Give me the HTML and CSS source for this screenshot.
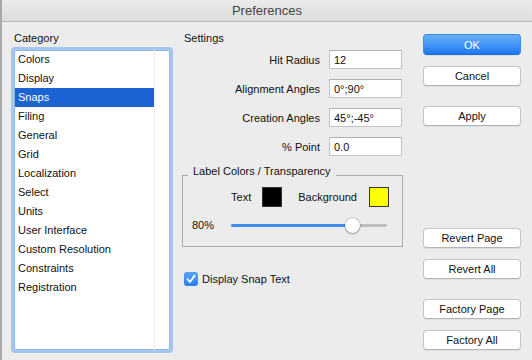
FILE: index.html
```html
<!DOCTYPE html>
<html lang="en">
<head>
  <meta charset="UTF-8" />
  <title>Preferences</title>
  <link rel="stylesheet" href="styles.css">
</head>
<body>

  <div class="window">
    <div class="titlebar">Preferences</div>

    <div class="content">

      <!-- category list -->
      <div class="category">
        <div class="heading category-heading">Category</div>
        <div class="list">
          <ul class="items">
            <li>Colors</li>
            <li>Display</li>
            <li class="selected">Snaps</li>
            <li>Filing</li>
            <li>General</li>
            <li>Grid</li>
            <li>Localization</li>
            <li>Select</li>
            <li>Units</li>
            <li>User Interface</li>
            <li>Custom Resolution</li>
            <li>Constraints</li>
            <li>Registration</li>
          </ul>
          <div class="scrollbar"></div>
        </div>
      </div>

      <!-- settings -->
      <div class="settings">
        <div class="heading settings-heading">Settings</div>

        <div class="fields">
          <label class="field"><span>Hit Radius</span><input type="text" value="12"></label>
          <label class="field"><span>Alignment Angles</span><input type="text" value="0°;90°"></label>
          <label class="field"><span>Creation Angles</span><input type="text" value="45°;-45°"></label>
          <label class="field"><span>% Point</span><input type="text" value="0.0"></label>
        </div>

        <div class="group">
          <div class="group-title">Label Colors / Transparency</div>
          <div class="swatches">
            <span>Text</span>
            <span class="swatch swatch-black"></span>
            <span class="swatch-label">Background</span>
            <span class="swatch swatch-yellow"></span>
          </div>
          <div class="slider-row">
            <span class="slider-value">80%</span>
            <div class="track">
              <div class="fill" style="width: 77.5%"></div>
              <div class="knob" style="left: 77.5%"></div>
            </div>
          </div>
        </div>

        <label class="check">
          <span class="checkbox">
            <svg width="14" height="14" viewBox="0 0 14 14">
              <path d="M3.5 7.2 L6 10 L10.6 3.6" fill="none" stroke="#fff" stroke-width="1.8" stroke-linecap="round" stroke-linejoin="round"/>
            </svg>
          </span>
          Display Snap Text
        </label>
      </div>

      <!-- buttons -->
      <div class="actions">
        <button class="btn btn-primary">OK</button>
        <button class="btn gap-sm">Cancel</button>
        <button class="btn gap-md">Apply</button>

        <button class="btn push">Revert Page</button>
        <button class="btn gap-sm">Revert All</button>
        <button class="btn gap-md">Factory Page</button>
        <button class="btn gap-sm">Factory All</button>
      </div>

    </div>
  </div>

</body>
</html>
```

FILE: styles.css
```css
body {
  margin: 0;
  background-color: #ececec;
  font-family: "Liberation Sans", Arial, sans-serif;
  font-size: 11px;
  color: #111;
  overflow: hidden;
}

.window {
  width: 532px;
  height: 360px;
  box-sizing: border-box;
  border-left: 2px solid #a8a8a8;
  display: flex;
  flex-direction: column;
}

.titlebar {
  height: 21px;
  line-height: 22px;
  border-bottom: 1px solid #b9b9b9;
  background: linear-gradient(#ebebeb, #dcdcdc);
  text-align: center;
  font-size: 13px;
  color: #444;
}

.content {
  flex: 1;
  min-height: 0;
  display: flex;
  padding: 9px 11px 7px 9px;
}

.heading {
  line-height: 14px;
  color: #111;
}

.category-heading {
  padding-left: 3px;
}

/* ---------- category ---------- */
.category {
  width: 162px;
}

.list {
  margin-top: 2px;
  height: 306px;
  box-sizing: border-box;
  border: 3px solid #a5c7f0;
  border-radius: 4px;
  box-shadow: inset 0 0 0 1px #8eb3e4;
  background-color: white;
  display: flex;
}

.items {
  flex: 1;
  list-style: none;
  margin: 0 0 0 1px;
  padding: 0;
}

.items li {
  height: 19px;
  line-height: 19px;
  padding-left: 3px;
  color: #111;
}

.items li.selected {
  background-color: #1c63d3;
  color: white;
}

.scrollbar {
  width: 15px;
  border-left: 1px solid #eeeeee;
}

/* ---------- settings ---------- */
.settings {
  width: 221px;
  margin-left: 9px;
}

.settings-heading {
  padding-left: 2px;
}

.fields {
  margin-top: 5px;
  display: flex;
  flex-direction: column;
  gap: 10px;
}

.field {
  display: flex;
  align-items: center;
  height: 19px;
}

.field span {
  width: 138px;
  text-align: right;
  margin-right: 9px;
}

.field input {
  width: 73px;
  height: 19px;
  box-sizing: border-box;
  border: 1px solid #c3c3c3;
  border-top-color: #b0b0b0;
  background: white;
  padding: 0 4px;
  font-family: inherit;
  font-size: 11px;
  color: #111;
  outline: none;
}

.group {
  margin-top: 19px;
  height: 72px;
  box-sizing: border-box;
  border: 1px solid #ababab;
  padding: 0 13px 0 9px;
}

.group-title {
  display: table;
  margin: -12px 0 0 -4px;
  padding: 0 5px;
  line-height: 14px;
  background-color: #ececec;
  color: #111;
}

.swatches {
  margin-top: 9px;
  height: 20px;
  display: flex;
  align-items: center;
  justify-content: flex-end;
}

.swatch {
  width: 20px;
  height: 20px;
  box-sizing: border-box;
  margin-left: 11px;
}

.swatch-black {
  background-color: #000;
  border: 1px solid #333;
}

.swatch-label {
  margin-left: 16px;
}

.swatch-yellow {
  margin-left: 12px;
  background-color: #ffff00;
  border: 1px solid #3a3a3a;
}

.slider-row {
  margin-top: 10px;
  height: 16px;
  display: flex;
  align-items: center;
}

.slider-value {
  width: 39px;
}

.track {
  position: relative;
  width: 156px;
  height: 3px;
  border-radius: 2px;
  background-color: #bfbfbf;
}

.fill {
  height: 3px;
  border-radius: 2px;
  background-color: #3d8ef1;
}

.knob {
  position: absolute;
  top: -6px;
  width: 15px;
  height: 15px;
  margin-left: -7px;
  border-radius: 50%;
  background: white;
  box-shadow: 0 0 0 0.5px rgba(0, 0, 0, 0.25), 0 1px 2px rgba(0, 0, 0, 0.3);
}

.check {
  margin-top: 25px;
  margin-left: 2px;
  display: flex;
  align-items: center;
  gap: 4px;
  color: #111;
}

.checkbox {
  width: 14px;
  height: 14px;
  border-radius: 3px;
  background: linear-gradient(#5aa2f6, #2b7ef0);
  display: flex;
}

/* ---------- buttons ---------- */
.actions {
  width: 98px;
  margin-left: 20px;
  padding: 3px 0 3px;
  display: flex;
  flex-direction: column;
}

.btn {
  height: 20px;
  padding: 0;
  background: white;
  border: 1px solid #c6c6c6;
  border-bottom-color: #b4b4b4;
  border-radius: 4px;
  box-shadow: 0 1px 1px rgba(0, 0, 0, 0.06);
  font-family: inherit;
  font-size: 11px;
  color: #111;
}

.btn-primary {
  height: 21px;
  background: linear-gradient(#69b1fa, #1e77f1);
  border-color: #3d88ee;
  border-bottom-color: #1f68d6;
  color: white;
}

.gap-sm {
  margin-top: 11px;
}

.gap-md {
  margin-top: 20px;
}

.push {
  margin-top: auto;
}
```
